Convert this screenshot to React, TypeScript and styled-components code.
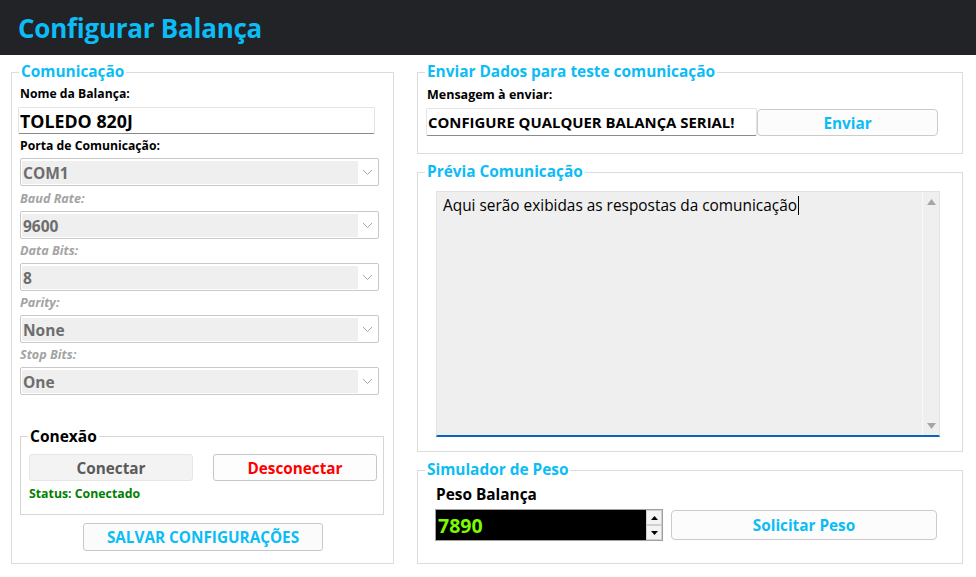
import React from 'react'
import styled, { createGlobalStyle } from 'styled-components'

const GlobalStyle = createGlobalStyle`
  html, body {
    margin: 0;
    padding: 0;
    background: #ffffff;
  }
  body {
    font-family: "Open Sans", "Noto Sans", "Liberation Sans", sans-serif;
  }
  * {
    box-sizing: border-box;
  }
`

const accent = '#0bbcf5'

const Chevron = () => (
  <svg width="11" height="7" viewBox="0 0 11 7">
    <polyline points="1,1 5.5,5.5 10,1" fill="none" stroke="#a8a8a8" strokeWidth="1" />
  </svg>
)

const Combo = ({ value }: { value: string }) => (
  <ComboBox>
    <ComboValue>{value}</ComboValue>
    <ComboArrow>
      <Chevron />
    </ComboArrow>
  </ComboBox>
)

const App = () => {
  return (
    <Page>
      <GlobalStyle />
      <Header>
        <Title>Configurar Balança</Title>
      </Header>
      <Main>
        <Group $height={502}>
          <Legend>Comunicação</Legend>
          <Body>
            <Label>Nome da Balança:</Label>
            <NameInput>TOLEDO 820J</NameInput>
            <Label>Porta de Comunicação:</Label>
            <Combo value="COM1" />
            <Label $muted $height={25}>Baud Rate:</Label>
            <Combo value="9600" />
            <Label $muted>Data Bits:</Label>
            <Combo value="8" />
            <Label $muted>Parity:</Label>
            <Combo value="None" />
            <Label $muted>Stop Bits:</Label>
            <Combo value="One" />

            <SubGroup>
              <SubLegend>Conexão</SubLegend>
              <ButtonRow>
                <ConnButton disabled>Conectar</ConnButton>
                <ConnButton $danger>Desconectar</ConnButton>
              </ButtonRow>
              <Status>Status: Conectado</Status>
            </SubGroup>

            <SaveButton>SALVAR CONFIGURAÇÕES</SaveButton>
          </Body>
        </Group>

        <RightColumn>
          <Group $height={92}>
            <Legend>Enviar Dados para teste comunicação</Legend>
            <Body>
              <SmallLabel>Mensagem à enviar:</SmallLabel>
              <SendRow>
                <MessageInput>CONFIGURE QUALQUER BALANÇA SERIAL!</MessageInput>
                <ActionButton $width={181} $height={27}>Enviar</ActionButton>
              </SendRow>
            </Body>
          </Group>

          <Group $height={290}>
            <Legend>Prévia Comunicação</Legend>
            <Preview>
              <PreviewText>
                Aqui serão exibidas as respostas da comunicação
                <Caret />
              </PreviewText>
              <ScrollTrack>
                <svg width="9" height="6" viewBox="0 0 9 6">
                  <polygon points="0,6 4.5,0 9,6" fill="#a6a6a6" />
                </svg>
                <svg width="9" height="6" viewBox="0 0 9 6">
                  <polygon points="0,0 4.5,6 9,0" fill="#a6a6a6" />
                </svg>
              </ScrollTrack>
            </Preview>
          </Group>

          <Group $height={104}>
            <Legend>Simulador de Peso</Legend>
            <Body>
              <WeightLabel>Peso Balança</WeightLabel>
              <WeightRow>
                <NumberBox>
                  <NumberValue>7890</NumberValue>
                  <Spinner>
                    <SpinButton>
                      <svg width="7" height="4" viewBox="0 0 7 4">
                        <polygon points="0,4 3.5,0 7,4" fill="#000" />
                      </svg>
                    </SpinButton>
                    <SpinButton>
                      <svg width="7" height="4" viewBox="0 0 7 4">
                        <polygon points="0,0 3.5,4 7,0" fill="#000" />
                      </svg>
                    </SpinButton>
                  </Spinner>
                </NumberBox>
                <ActionButton $width={266} $height={30}>Solicitar Peso</ActionButton>
              </WeightRow>
            </Body>
          </Group>
        </RightColumn>
      </Main>
    </Page>
  )
}

export default App

const Page = styled.div`
width: 976px;
height: 577px;
overflow: hidden;
background: #fff;
`

const Header = styled.div`
height: 55px;
background: #212327;
display: flex;
align-items: center;
padding-left: 18px;
`

const Title = styled.h1`
margin: 0;
font-size: 26px;
font-weight: 700;
color: ${accent};
letter-spacing: -0.25px;
`

const Main = styled.div`
display: grid;
grid-template-columns: 383px 546px;
column-gap: 23px;
padding: 7px 0 0 11px;
align-items: start;
`

const RightColumn = styled.div`
display: flex;
flex-direction: column;
gap: 8px;
`

const Group = styled.fieldset<{ $height: number }>`
margin: 0;
padding: 0;
min-width: 0;
height: ${p => p.$height}px;
border: 1px solid #dcdcdc;
`

const Legend = styled.legend`
margin-left: 7px;
padding: 0 2px;
font-size: 15.4px;
line-height: 20px;
font-weight: 700;
color: ${accent};
`

const Body = styled.div`
display: flex;
flex-direction: column;
align-items: flex-start;
padding-left: 8px;
`

const Label = styled.div<{ $muted?: boolean; $height?: number }>`
height: ${p => p.$height ?? 24}px;
line-height: ${p => p.$height ?? 24}px;
font-size: ${p => (p.$muted ? '12.6px' : '12.2px')};
font-weight: 700;
font-style: ${p => (p.$muted ? 'italic' : 'normal')};
color: ${p => (p.$muted ? '#a3a3a3' : '#000')};
`

const NameInput = styled.div`
margin: 1px 0 0 -2px;
width: 357px;
height: 27px;
border: 1px solid #e4e4e4;
border-bottom-color: #8a8a8a;
border-radius: 2px;
padding-left: 1px;
display: flex;
align-items: center;
font-size: 17.8px;
font-weight: 700;
color: #000;
`

const ComboBox = styled.div`
width: 359px;
height: 28px;
border: 1px solid #c9c9c9;
border-radius: 2px;
padding: 2px 1px 1px 1px;
display: flex;
`

const ComboValue = styled.div`
flex: 1;
background: #efefef;
display: flex;
align-items: center;
padding-left: 1px;
font-size: 15.5px;
font-weight: 700;
color: #6d6d6d;
`

const ComboArrow = styled.div`
width: 19px;
display: flex;
align-items: center;
justify-content: center;
`

const SubGroup = styled.fieldset`
margin: 31px 0 0 0;
padding: 0;
width: 364px;
height: 89px;
min-width: 0;
border: 1px solid #d6d6d6;
`

const SubLegend = styled.legend`
margin-left: 7px;
padding: 0 2px;
font-size: 15.5px;
line-height: 20px;
font-weight: 700;
color: #000;
`

const ButtonRow = styled.div`
display: flex;
gap: 20px;
margin-top: 8px;
padding-left: 8px;
`

const ConnButton = styled.button<{ $danger?: boolean }>`
width: 164px;
height: 27px;
border-radius: 3px;
font-family: inherit;
font-size: 15.3px;
font-weight: 700;
padding: 0;
border: 1px solid ${p => (p.$danger ? '#c6c6c6' : '#e6e6e6')};
background: ${p => (p.$danger ? '#fdfdfd' : '#f3f3f3')};
color: ${p => (p.$danger ? '#ff0000' : '#5a5a5a')};
`

const Status = styled.div`
margin-top: 3px;
padding-left: 8px;
line-height: 20px;
font-size: 12.3px;
font-weight: 700;
color: #008000;
`

const SaveButton = styled.button`
margin: 8px 0 0 63px;
width: 240px;
height: 28px;
border: 1px solid #c8c8c8;
border-radius: 3px;
background: #fbfbfb;
font-family: inherit;
font-size: 15.3px;
font-weight: 700;
color: ${accent};
padding: 0;
`

const SmallLabel = styled.div`
height: 26px;
line-height: 26px;
padding-left: 1px;
font-size: 12.5px;
font-weight: 700;
color: #000;
`

const SendRow = styled.div`
display: flex;
align-items: flex-start;
`

const MessageInput = styled.div`
width: 331px;
height: 28px;
border: 1px solid #e4e4e4;
border-bottom-color: #8a8a8a;
border-radius: 2px;
padding-left: 1px;
display: flex;
align-items: center;
font-size: 14.9px;
font-weight: 700;
color: #000;
white-space: nowrap;
overflow: hidden;
`

const ActionButton = styled.button<{ $width: number; $height: number }>`
width: ${p => p.$width}px;
height: ${p => p.$height}px;
margin-top: 1px;
border: 1px solid #cbcbcb;
border-radius: 4px;
background: #fcfcfc;
font-family: inherit;
font-size: 15.3px;
font-weight: 700;
color: ${accent};
padding: 0;
`

const Preview = styled.div`
margin: 9px 0 0 18px;
width: 504px;
height: 246px;
background: #efefef;
border: 1px solid #e2e2e2;
border-bottom: 2px solid #0a64c0;
display: flex;
`

const PreviewText = styled.div`
flex: 1;
padding: 3px 0 0 6px;
font-size: 15.4px;
line-height: 22px;
color: #000;
`

const Caret = styled.span`
display: inline-block;
width: 1px;
height: 19px;
margin-left: 1px;
background: #000;
vertical-align: -4px;
`

const ScrollTrack = styled.div`
width: 17px;
border-left: 1px solid #f9f9f9;
display: flex;
flex-direction: column;
justify-content: space-between;
align-items: center;
padding: 7px 0 6px;
`

const WeightLabel = styled.div`
height: 29px;
line-height: 30px;
padding-left: 10px;
font-size: 15.4px;
font-weight: 700;
color: #000;
`

const WeightRow = styled.div`
display: flex;
align-items: flex-start;
gap: 8px;
padding-left: 9px;
`

const NumberBox = styled.div`
width: 228px;
height: 32px;
background: #000;
border: 1px solid #a0a0a0;
display: flex;
`

const NumberValue = styled.div`
flex: 1;
display: flex;
align-items: center;
padding-left: 2px;
font-size: 19.5px;
font-weight: 700;
color: #7cfc00;
`

const Spinner = styled.div`
width: 16px;
display: flex;
flex-direction: column;
background: #fff;
`

const SpinButton = styled.div`
flex: 1;
display: flex;
align-items: center;
justify-content: center;
background: #f3f3f3;
border: 1px solid #d0d0d0;
`
